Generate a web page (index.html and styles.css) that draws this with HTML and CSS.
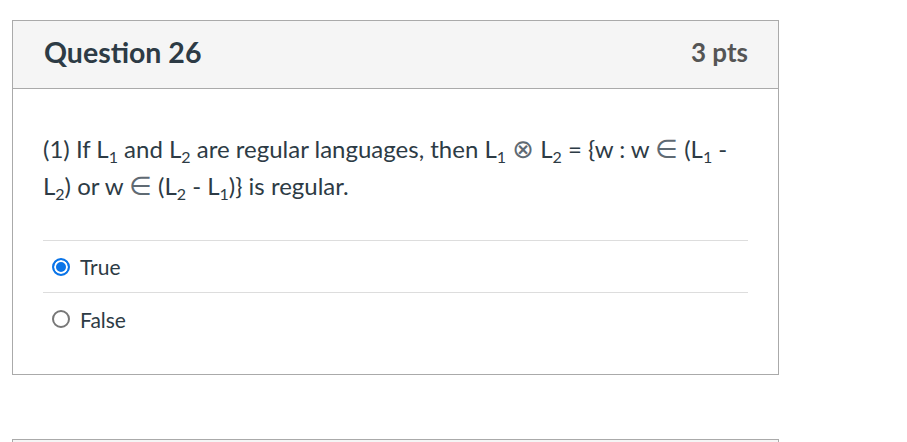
FILE: index.html
```html
<!DOCTYPE html>
<html>
<head>
<meta charset="utf-8">
<link rel="stylesheet" href="styles.css">
</head>
<body>
<div class="page">
  <div class="question">
    <div class="header">
      <h2 class="title">Question 26</h2>
      <span class="pts">3 pts</span>
    </div>
    <div class="body">
      <p class="text">(1) If L<sub>1</sub> and L<sub>2</sub> are regular languages, then L<sub>1</sub> <span class="sym">&#x2297;</span> L<sub>2</sub> = {w : w <span class="sym">&#x2208;</span> (L<sub>1</sub> - L<sub>2</sub>) or w <span class="sym">&#x2208;</span> (L<sub>2</sub> - L<sub>1</sub>)} is regular.</p>
      <div class="answers">
        <label class="answer"><span class="radio checked"></span><span class="label">True</span></label>
        <label class="answer"><span class="radio"></span><span class="label">False</span></label>
      </div>
    </div>
  </div>
  <div class="question next">
    <div class="header"></div>
  </div>
</div>
</body>
</html>
```
FILE: styles.css
```css
* { box-sizing: border-box; }
html, body { margin: 0; padding: 0; background: #fff; }
body { font-family: Lato, "Liberation Sans", sans-serif; color: #2d3b45; }
.page { padding: 20px 0 0 12px; width: 790px; }
.question { width: 767px; border: 1px solid #aaaaaa; }
.header {
  display: flex; justify-content: space-between; align-items: center;
  background: #f5f5f5; border-bottom: 1px solid #aaaaaa;
  height: 68px; padding: 0 30px 5px 31px;
}
.title { margin: 0; font-size: 28.5px; font-weight: 700; color: #2d3b45; }
.pts { font-size: 26px; font-weight: 700; color: #555; }
.body { padding: 41px 30px 29px 30px; }
.text { margin: 0; font-size: 24px; line-height: 37px; }
.text sub { font-size: 16px; line-height: 0; vertical-align: -5px; }
.sym { font-family: "DejaVu Sans", sans-serif; font-size: 26px; line-height: 0; color: #5f6a73; }
.answers { margin-top: 36px; border-top: 1px solid #dddddd; }
.answer { display: flex; align-items: center; height: 52px; border-bottom: 1px solid #dddddd; padding-left: 9px; font-size: 21px; }
.answer:last-child { border-bottom: none; }
.radio { width: 18px; height: 18px; border-radius: 50%; border: 2px solid #777; margin-right: 10px; flex: none; }
.radio.checked { border: 2px solid #0a74e8; background: #0a74e8; box-shadow: inset 0 0 0 2px #fff; }
.next { margin-top: 64px; }
```
